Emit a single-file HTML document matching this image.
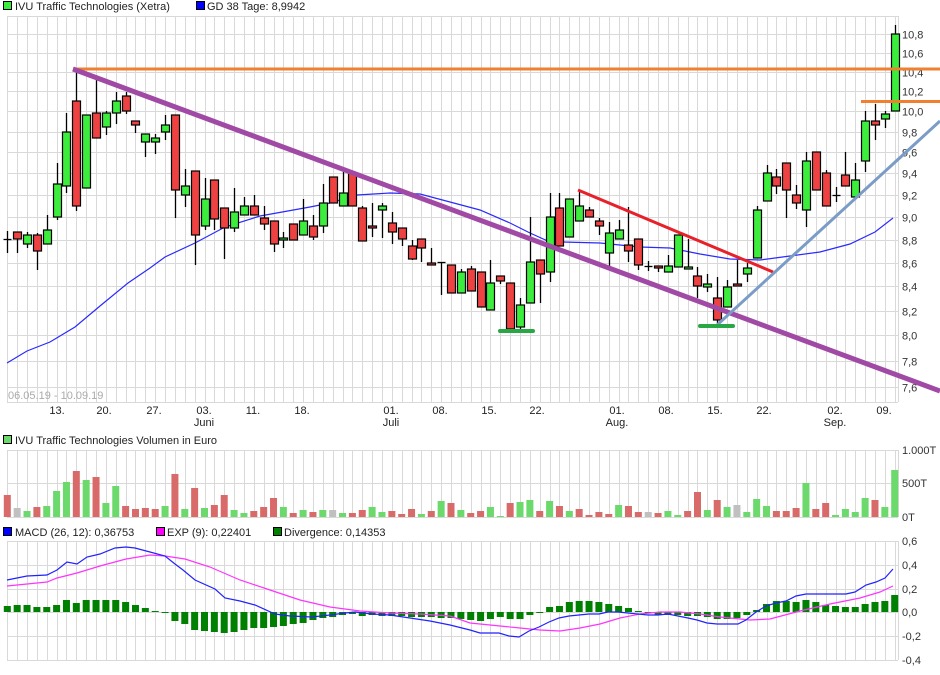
<!DOCTYPE html>
<html><head><meta charset="utf-8">
<style>
html,body{margin:0;padding:0;background:#fff;}
body{width:940px;height:670px;overflow:hidden;font-family:"Liberation Sans",sans-serif;}
svg text{font-family:"Liberation Sans",sans-serif;}
</style></head>
<body>
<svg id="s" width="940" height="670" xmlns="http://www.w3.org/2000/svg">
<rect width="940" height="670" fill="#fff"/>
<g id="grid"></g>
<g id="content"></g>
<g font-size="11" fill="#222">
<rect x="3.5" y="1.5" width="8" height="8" fill="#3ded3d" stroke="#000"/>
<text x="15" y="10">IVU Traffic Technologies (Xetra)</text>
<rect x="196.5" y="1.5" width="8" height="8" fill="#0000ff" stroke="#000"/>
<text x="207" y="10">GD 38 Tage: 8,9942</text>
<rect x="3.5" y="435.5" width="8" height="8" fill="#6bd96b" stroke="#000"/>
<text x="15" y="444">IVU Traffic Technologies Volumen in Euro</text>
<rect x="3.5" y="527.5" width="8" height="8" fill="#0000ff" stroke="#000"/>
<text x="15" y="536">MACD (26, 12): 0,36753</text>
<rect x="156.5" y="527.5" width="8" height="8" fill="#ff00ff" stroke="#000"/>
<text x="167" y="536">EXP (9): 0,22401</text>
<rect x="273.5" y="527.5" width="8" height="8" fill="#008000" stroke="#000"/>
<text x="284" y="536">Divergence: 0,14353</text>
</g>
</svg>
<script>
const NS="http://www.w3.org/2000/svg";
const grid=document.getElementById('grid'),C=document.getElementById('content');
function el(p,t,a,txt){const e=document.createElementNS(NS,t);for(const k in a)e.setAttribute(k,a[k]);if(txt!=null)e.textContent=txt;p.appendChild(e);return e;}
const X=i=>7.3+9.86*i;
const L=7,R=898;
const Y=p=>34+1004.6*(Math.log(10.8)-Math.log(p));
const gc="#d9d9d9";
for(let i=0;i<=90;i++){const x=Math.round(X(i))+0.5;
 el(grid,'line',{x1:x,x2:x,y1:16,y2:402,stroke:gc});
 el(grid,'line',{x1:x,x2:x,y1:450,y2:517,stroke:gc});
 el(grid,'line',{x1:x,x2:x,y1:541,y2:660,stroke:gc});}
[R+0.5].forEach(x=>{el(grid,'line',{x1:x,x2:x,y1:16,y2:402,stroke:gc});el(grid,'line',{x1:x,x2:x,y1:450,y2:517,stroke:gc});el(grid,'line',{x1:x,x2:x,y1:541,y2:660,stroke:gc});});
for(let k=0;k<=17;k++){const p=7.6+0.2*k;const y=Math.round(Y(p))+0.5;
 el(grid,'line',{x1:L,x2:R,y1:y,y2:y,stroke:gc});
 if(p<10.9) el(grid,'text',{x:902,y:y+4,'font-size':11,fill:'#333'},p.toFixed(1).replace('.',','));}
el(grid,'line',{x1:L,x2:R,y1:16.5,y2:16.5,stroke:gc});
el(grid,'line',{x1:L,x2:R,y1:402.5,y2:402.5,stroke:gc});
[[57,'13.'],[104,'20.'],[154,'27.'],[204,'03.'],[253,'11.'],[302,'18.'],[391,'01.'],[440,'08.'],[489,'15.'],[537,'22.'],[617,'01.'],[666,'08.'],[715,'15.'],[764,'22.'],[835,'02.'],[884,'09.']].forEach(([x,t])=>el(grid,'text',{x:x,y:414,'font-size':11,fill:'#222','text-anchor':'middle'},t));
[[204,'Juni'],[391,'Juli'],[617,'Aug.'],[835,'Sep.']].forEach(([x,t])=>el(grid,'text',{x:x,y:426,'font-size':11,fill:'#222','text-anchor':'middle'},t));
el(grid,'text',{x:8,y:399,'font-size':11,fill:'#aaa'},'06.05.19 - 10.09.19');
[450.5,483.5,517.5].forEach(y=>el(grid,'line',{x1:L,x2:R,y1:y,y2:y,stroke:gc}));
[[454,'1.000T'],[487,'500T'],[521,'0T']].forEach(([y,t])=>el(grid,'text',{x:902,y:y,'font-size':11,fill:'#333'},t));
[[541,'0,6'],[565,'0,4'],[589,'0,2'],[612,'0,0'],[636,'-0,2'],[660,'-0,4']].forEach(([y,t])=>{el(grid,'line',{x1:L,x2:R,y1:y+0.5,y2:y+0.5,stroke:gc});el(grid,'text',{x:902,y:y+4,'font-size':11,fill:'#333'},t);});

const ma=[[7,363],[27,351],[50,342],[75,327],[100,306],[128,283],[150,268],[165,257],[195,243],[225,227],[260,216],[310,207],[330,203],[357,195],[390,193],[420,194],[450,202],[480,210],[510,223],[530,233],[550,242],[563,242],[600,243],[640,247],[670,248],[700,254],[730,259],[760,260],[790,256],[820,252],[850,244],[875,232],[893,218]];
el(C,'polyline',{points:ma.map(p=>p.join(',')).join(' '),fill:'none',stroke:'#2a2aff','stroke-width':1.2});

const cd=[[0,'d',239,239,231,253],[1,'r',232,239,232,253],[2,'g',235,244,232,248],[3,'r',235,251,233,270],[4,'g',230,244,215,244],[5,'g',184,217,163,220],[6,'g',132,186,113,193],[7,'r',101,206,69,211],[8,'g',115,188,115,188],[9,'r',113,138,80,138],[10,'g',113,127,111,135],[11,'g',101,113,92,124],[12,'r',96,111,92,114],[13,'r',121,125,121,133],[14,'g',134,142,134,157],[15,'g',138,142,134,154],[16,'g',125,132,115,140],[17,'r',115,190,115,218],[18,'g',186,195,169,207],[19,'r',171,235,171,265],[20,'g',199,226,178,230],[21,'r',180,219,180,230],[22,'r',208,228,208,259],[23,'g',212,228,188,232],[24,'g',206,215,197,215],[25,'r',206,215,195,215],[26,'r',218,224,206,230],[27,'r',221,244,221,252],[28,'g',238,240,232,248],[29,'r',224,240,224,240],[30,'g',221,235,199,235],[31,'r',226,237,215,240],[32,'g',203,226,184,233],[33,'r',177,203,177,203],[34,'g',193,206,172,206],[35,'r',173,206,173,206],[36,'r',208,241,206,241],[37,'r',226,228,203,237],[38,'g',206,210,203,238],[39,'r',223,232,212,244],[40,'r',228,239,228,246],[41,'r',246,259,240,260],[42,'r',239,248,239,262],[43,'r',263,265,248,265],[44,'d',262,262,262,295],[45,'r',265,293,265,293],[46,'g',272,293,269,293],[47,'r',269,291,266,291],[48,'r',272,307,272,307],[49,'g',283,310,260,310],[50,'r',276,281,276,284],[51,'r',283,329,283,329],[52,'g',305,327,298,329],[53,'g',262,303,217,303],[54,'r',260,274,260,303],[55,'g',217,272,193,282],[56,'r',208,246,193,246],[57,'g',199,237,199,237],[58,'g',206,221,190,221],[59,'r',210,217,207,217],[60,'r',221,226,218,235],[61,'g',233,253,222,266],[62,'g',230,239,220,239],[63,'r',245,251,207,262],[64,'r',239,265,239,270],[65,'d',266,266,261,271],[66,'r',266,268,266,272],[67,'g',266,272,255,272],[68,'g',235,267,235,267],[69,'g',267,269,239,269],[70,'r',276,286,267,298],[71,'g',284,287,274,292],[72,'r',298,320,277,324],[73,'g',287,307,280,307],[74,'r',284,286,260,286],[75,'g',268,274,263,282],[76,'g',210,258,206,258],[77,'g',173,201,165,201],[78,'r',177,186,169,194],[79,'r',163,190,163,218],[80,'r',195,203,185,209],[81,'g',161,210,152,227],[82,'r',152,190,152,190],[83,'r',173,206,170,206],[84,'d',195,195,187,202],[85,'r',175,186,152,186],[86,'g',180,197,163,197],[87,'g',121,161,111,172],[88,'r',121,125,104,140],[89,'g',114,119,111,128],[90,'g',34,111,25,111]];
cd.forEach(([i,c,bt,bb,wt,wb])=>{const x=Math.round(X(i))+0.5;
 el(C,'line',{x1:x,x2:x,y1:wt,y2:wb,stroke:'#000','stroke-width':1.3});
 if(c==='d'){el(C,'line',{x1:x-4,x2:x+4,y1:bt+0.5,y2:bt+0.5,stroke:'#000','stroke-width':1.3});}
 else{el(C,'rect',{x:x-4,y:bt,width:8,height:Math.max(bb-bt,2),fill:c==='g'?'#3ded3d':'#ee4242',stroke:'#000','stroke-width':1.2});}
});
el(C,'line',{x1:73,y1:69,x2:940,y2:69,stroke:'#f08030','stroke-width':3});
el(C,'line',{x1:861,y1:101.5,x2:940,y2:101.5,stroke:'#f08030','stroke-width':3});
el(C,'line',{x1:73,y1:69,x2:940,y2:391,stroke:'#a04aa5','stroke-width':5});
el(C,'line',{x1:578,y1:190,x2:773,y2:272,stroke:'#e8202a','stroke-width':3});
el(C,'line',{x1:716,y1:326,x2:940,y2:121,stroke:'#7a9cc6','stroke-width':3});
el(C,'line',{x1:500,y1:331,x2:533,y2:331,stroke:'#28a745','stroke-width':4,'stroke-linecap':'round'});
el(C,'line',{x1:700,y1:326,x2:733,y2:326,stroke:'#28a745','stroke-width':4,'stroke-linecap':'round'});

const vol="r495 n508 g511 r507 g506 g491 g482 r471 g480 r477 g503 g486 r506 r509 r508 r509 g506 r474 g509 r488 g508 r505 r495 g510 g513 r511 r507 r498 g507 r513 g510 r512 g510 n510 g513 r513 r510 g507 g512 r511 r514 r509 g514 r511 g501 r503 g510 r513 r511 g507 g516 r503 g502 g500 r511 g501 r506 g511 r509 r515 r512 r514 g505 r506 r512 n512 r513 g511 g515 r511 r492 g510 r500 g507 n505 g512 g499 g506 r511 r511 r508 g483 r509 r503 g515 g509 g512 g498 r500 g507 g470".split(' ');
vol.forEach((v,i)=>{const c={g:'#6bd96b',r:'#d96a6a',n:'#c0c0c0'}[v[0]];const t=+v.slice(1);const x=X(i);
 el(C,'rect',{x:x-3.5,y:t,width:7,height:517-t,fill:c});});

const h=[606,605,605,607,607,605,600,603,600,600,600,600,602,605,608,611,613,621,624,630,631,632,633,632,630,628,628,627,626,624,623,620,618,617,615,614,616,615,616,616,616,617,617,617,618,618,619,620,621,619,617,619,619,615,613,607,606,602,601,601,602,604,606,608,611,612,615,615,615,616,616,617,619,619,618,615,610,604,601,601,602,600,602,605,606,607,607,604,602,601,595];
h.forEach((v,i)=>{const x=X(i);const a=Math.min(v,612),b=Math.max(v,612);
 el(C,'rect',{x:x-3.5,y:a,width:7,height:Math.max(b-a,1),fill:'#008000'});});
const macd=[[7,580],[27,576],[47,575],[57,570],[67,562],[77,564],[87,557],[100,554],[115,548],[126,547],[135,548],[150,552],[165,556],[175,564],[183,570],[195,580],[215,589],[225,598],[240,601],[255,605],[275,614],[290,616],[312,617],[330,615],[345,613],[355,612],[372,614],[390,615],[410,618],[430,621],[450,625],[470,630],[480,633],[499,633],[509,636],[519,637],[529,631],[539,627],[549,622],[559,618],[569,616],[579,615],[589,614],[599,614],[608,612],[618,612],[628,613],[638,614],[648,615],[658,615],[668,614],[678,616],[688,618],[697,620],[707,623],[717,624],[725,624],[738,624],[746,620],[756,612],[766,606],[776,603],[786,601],[796,596],[806,594],[826,594],[846,594],[855,592],[866,585],[876,582],[885,578],[893,569]];
const exp=[[7,586],[47,582],[57,578],[77,573],[100,566],[126,559],[150,555],[165,556],[185,559],[210,567],[240,580],[270,590],[300,600],[330,607],[360,611],[390,613],[420,614],[450,616],[470,623],[500,626],[520,628],[540,630],[560,631],[580,628],[600,624],[620,618],[640,614],[660,612],[680,612],[700,614],[720,617],[750,620],[770,619],[800,611],[830,604],[860,598],[880,592],[893,586]];
el(C,'polyline',{points:exp.map(p=>p.join(',')).join(' '),fill:'none',stroke:'#ff33ff','stroke-width':1.2});
el(C,'polyline',{points:macd.map(p=>p.join(',')).join(' '),fill:'none',stroke:'#2222ff','stroke-width':1.2});
</script>
</body></html>
